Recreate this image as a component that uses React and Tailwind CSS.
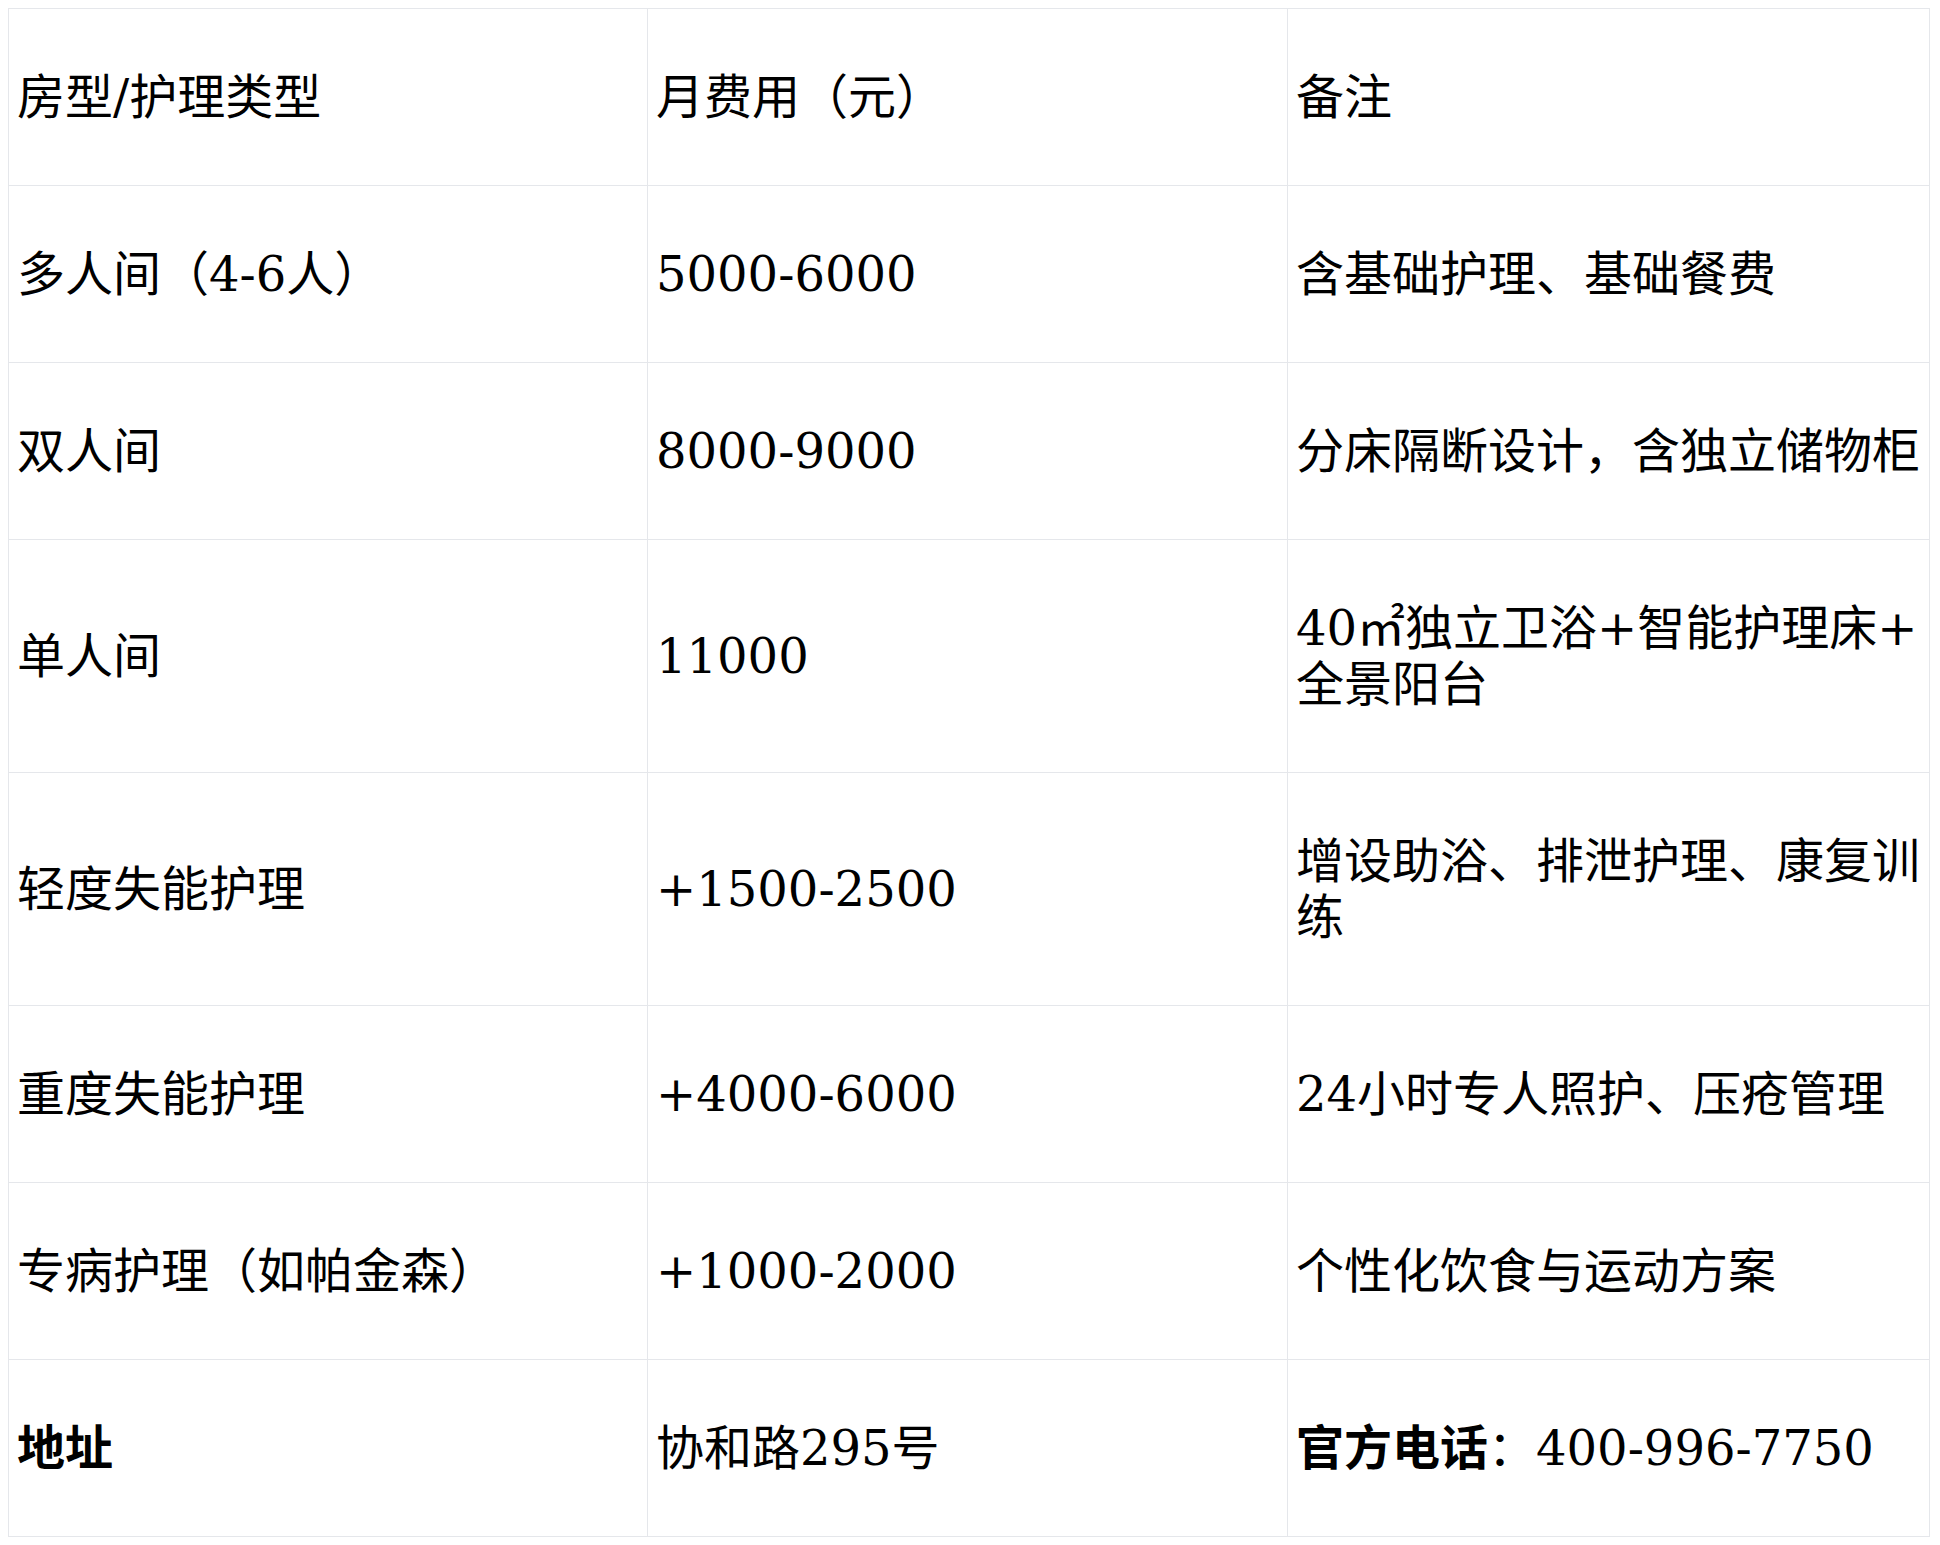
import React from "react";

const rows = [
  ["多人间（4-6人）", "5000-6000", "含基础护理、基础餐费"],
  ["双人间", "8000-9000", "分床隔断设计，含独立储物柜"],
  [
    "单人间",
    "11000",
    <>
      40㎡独立卫浴+智能护理床+<wbr />全景阳台
    </>,
  ],
  ["轻度失能护理", "+1500-2500", "增设助浴、排泄护理、康复训练"],
  ["重度失能护理", "+4000-6000", "24小时专人照护、压疮管理"],
  ["专病护理（如帕金森）", "+1000-2000", "个性化饮食与运动方案"],
];

const cell = "border border-gray-200 px-2 py-[60px] align-middle text-left font-normal";

const App = () => {
  return (
    <div
      className="bg-white p-2 text-black text-[48px] leading-[56px]"
      style={{ fontFamily: '"DejaVu Serif", "Noto Sans CJK SC", serif' }}
    >
      <table className="w-[1921px] table-fixed border-collapse">
        <colgroup>
          <col className="w-[639px]" />
          <col className="w-[640px]" />
          <col className="w-[642px]" />
        </colgroup>
        <thead>
          <tr>
            <th className={cell}>房型/护理类型</th>
            <th className={cell}>月费用（元）</th>
            <th className={cell}>备注</th>
          </tr>
        </thead>
        <tbody>
          {rows.map((row, index) => (
            <tr key={index}>
              <td className={cell}>{row[0]}</td>
              <td className={cell}>{row[1]}</td>
              <td className={cell}>{row[2]}</td>
            </tr>
          ))}
          <tr>
            <td className={cell}>
              <strong className="font-bold">地址</strong>
            </td>
            <td className={cell}>协和路295号</td>
            <td className={cell}>
              <strong className="font-bold">官方电话</strong>：400-996-7750
            </td>
          </tr>
        </tbody>
      </table>
    </div>
  );
};

export default App;
